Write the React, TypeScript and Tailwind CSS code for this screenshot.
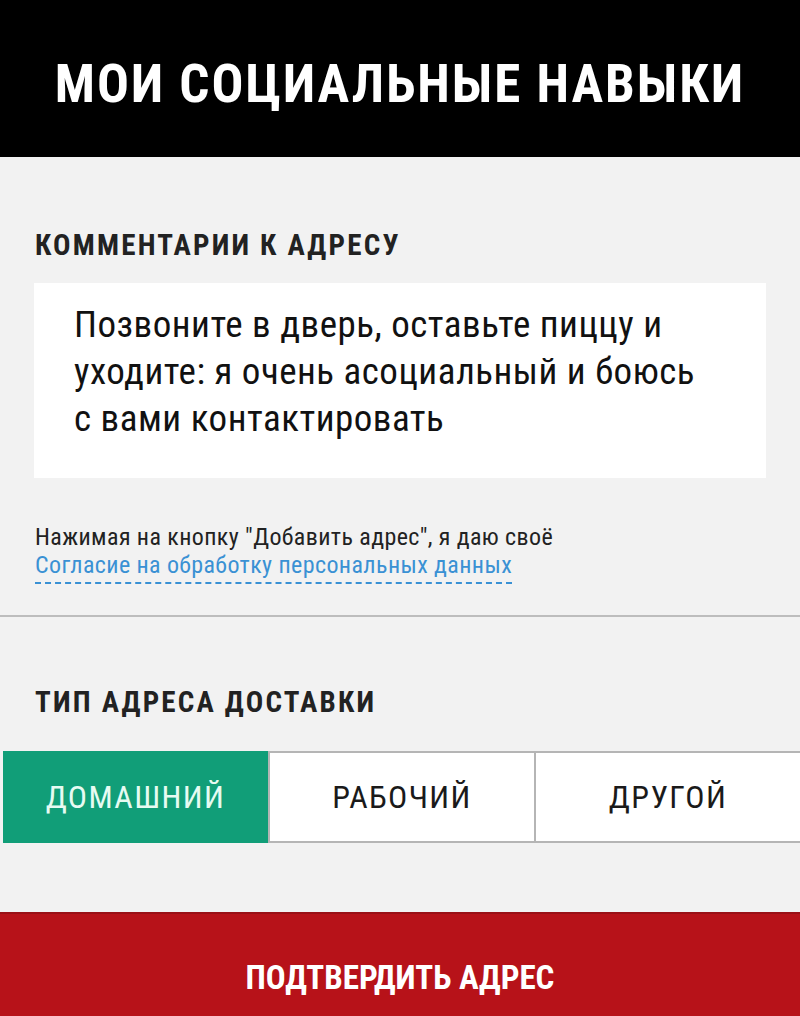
import React from 'react';

const types = ['ДОМАШНИЙ', 'РАБОЧИЙ', 'ДРУГОЙ'];

const App = () => {
  const active = 0;

  return (
    <div className="w-[800px] h-[1016px] flex flex-col bg-[#f2f2f2] font-['Roboto',sans-serif] overflow-hidden">
      {/* Caption bar */}
      <div className="h-[157px] bg-black flex items-center justify-center pt-[11px]">
        <h1 className="text-white text-[53px] font-bold tracking-[2px] [font-stretch:75%] leading-none">
          МОИ СОЦИАЛЬНЫЕ НАВЫКИ
        </h1>
      </div>

      <div className="flex flex-col">
        <h2 className="mt-[74px] ml-[35px] text-[29px] font-bold text-[#222] [font-stretch:75%] tracking-[2.2px] leading-none">
          КОММЕНТАРИИ К АДРЕСУ
        </h2>

        <div className="mt-[23px] mx-[34px] h-[195px] bg-white pl-[40px] pt-[18px]">
          <p className="text-[37px] leading-[47px] text-[#111] [font-stretch:75%] tracking-[0.5px]">
            Позвоните в дверь, оставьте пиццу и
            <br />
            уходите: я очень асоциальный и боюсь
            <br />с вами контактировать
          </p>
        </div>

        <div className="mt-[45px] ml-[35px] text-[24px] leading-[28px] [font-stretch:75%] tracking-[0.4px]">
          <p className="text-[#222]">Нажимая на кнопку "Добавить адрес", я даю своё</p>
          <span className="text-[#3a91d4] border-b-2 border-dashed border-[#3a91d4] pb-[3px]">
            Согласие на обработку персональных данных
          </span>
        </div>

        <div className="mt-[36px] h-[2px] bg-[#bdbdbd]" />

        <h2 className="mt-[71px] ml-[35px] text-[29px] font-bold text-[#222] [font-stretch:75%] tracking-[2.2px] leading-none">
          ТИП АДРЕСА ДОСТАВКИ
        </h2>

        {/* Address type switch */}
        <div className="mt-[34px] ml-[3px] h-[92px] flex border-y-2 border-[#b5b5b5]">
          {types.map((t, i) => (
            <div
              key={t}
              className={
                i === active
                  ? 'w-[265px] -my-[2px] bg-[#119e78] text-[#e6fbf2] flex items-center justify-center text-[32px] [font-stretch:75%] tracking-[1.4px]'
                  : 'flex-1 bg-white text-[#1a1a1a] flex items-center justify-center text-[32px] [font-stretch:75%] tracking-[1.4px] border-l-2 border-[#b5b5b5] first:border-l-0'
              }
            >
              {t}
            </div>
          ))}
        </div>
      </div>

      {/* Confirm button */}
      <div className="mt-auto h-[104px] bg-[#b71219] border-t-2 border-[#9a1016] flex items-center justify-center">
        <span className="text-white text-[33px] font-bold [font-stretch:75%] mt-[26px]">ПОДТВЕРДИТЬ АДРЕС</span>
      </div>
    </div>
  );
};

export default App;
